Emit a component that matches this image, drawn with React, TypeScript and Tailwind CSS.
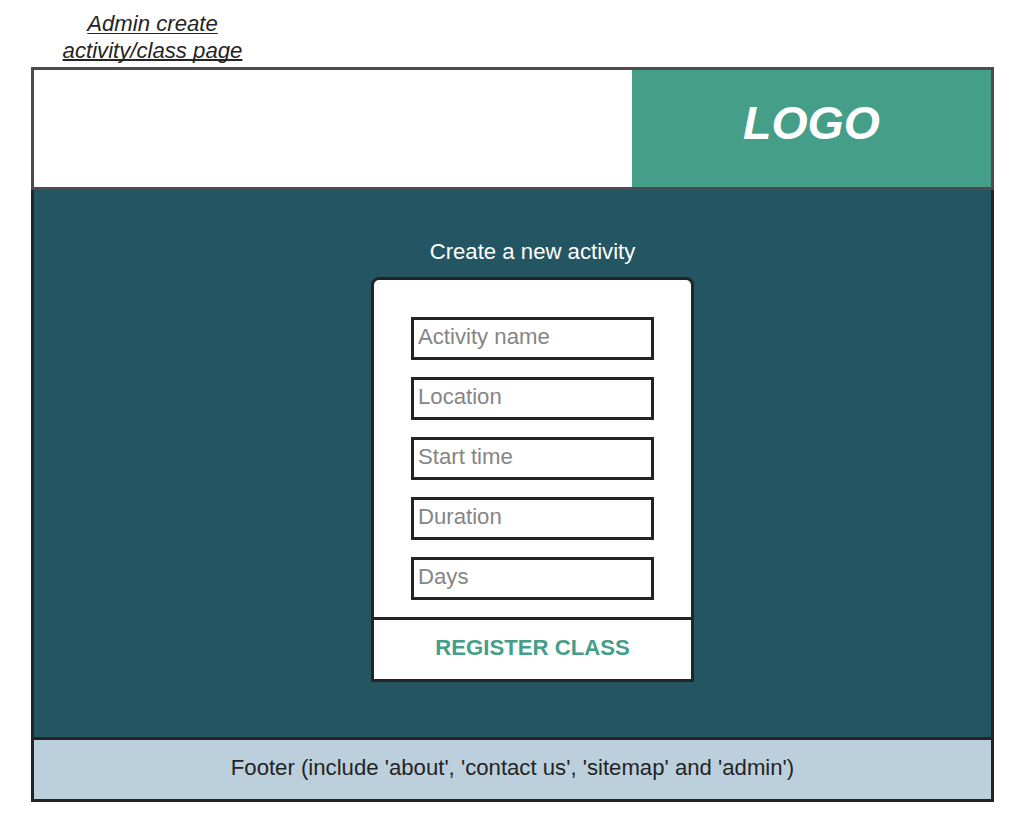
const fields = ["Activity name", "Location", "Start time", "Duration", "Days"];

function PageTitle() {
  return (
    <h1 className="ml-[31px] flex h-[67px] w-[243px] flex-col items-center pt-[10px] text-center italic leading-[27px] text-[#242424]">
      <span className="underline decoration-1 underline-offset-2 [text-decoration-skip-ink:none]">Admin create</span>
      <span className="underline decoration-2 underline-offset-1 [text-decoration-skip-ink:none]">activity/class page</span>
    </h1>
  );
}

function Header() {
  return (
    <header className="flex h-[123px] justify-end border-3 border-[#4c4c4c] bg-white">
      <div className="flex w-[359px] justify-center bg-[#459e87] pt-[26px]">
        <span className="text-[46.5px] leading-[54px] font-bold italic text-white">LOGO</span>
      </div>
    </header>
  );
}

function ActivityForm() {
  return (
    <form className="flex h-[405px] w-[323px] flex-col rounded-t-lg border-3 border-[#242424] bg-white">
      <div className="flex flex-1 flex-col items-center gap-[17px] pt-[37px]">
        {fields.map((field) => (
          <div key={field} className="h-[43px] w-[243px] border-3 border-[#242424] pt-[3px] pl-1 leading-[27px] text-[#858585]">
            {field}
          </div>
        ))}
      </div>
      <button type="button" className="flex h-[62px] justify-center border-t-3 border-[#242424] pt-[14px] leading-[27px] font-bold text-[#459e87]">
        REGISTER CLASS
      </button>
    </form>
  );
}

export default function App() {
  return (
    <div className="h-[814px] w-[1028px] overflow-hidden bg-white font-['Liberation_Sans',Arial,sans-serif] text-[22.16px]">
      <PageTitle />
      <div className="ml-[31px] w-[963px]">
        <Header />
        <main className="flex h-[547px] flex-col items-center border-x-3 border-[#242424] bg-[#245563] pt-[48px] pl-10">
          <h2 className="mb-[12px] leading-[27px] text-white">Create a new activity</h2>
          <ActivityForm />
        </main>
        <footer className="flex h-[65px] justify-center border-3 border-[#242424] bg-[#bccfdd] pt-[14px] leading-[27px] text-[#242424]">
          Footer (include 'about', 'contact us', 'sitemap' and 'admin')
        </footer>
      </div>
    </div>
  );
}
